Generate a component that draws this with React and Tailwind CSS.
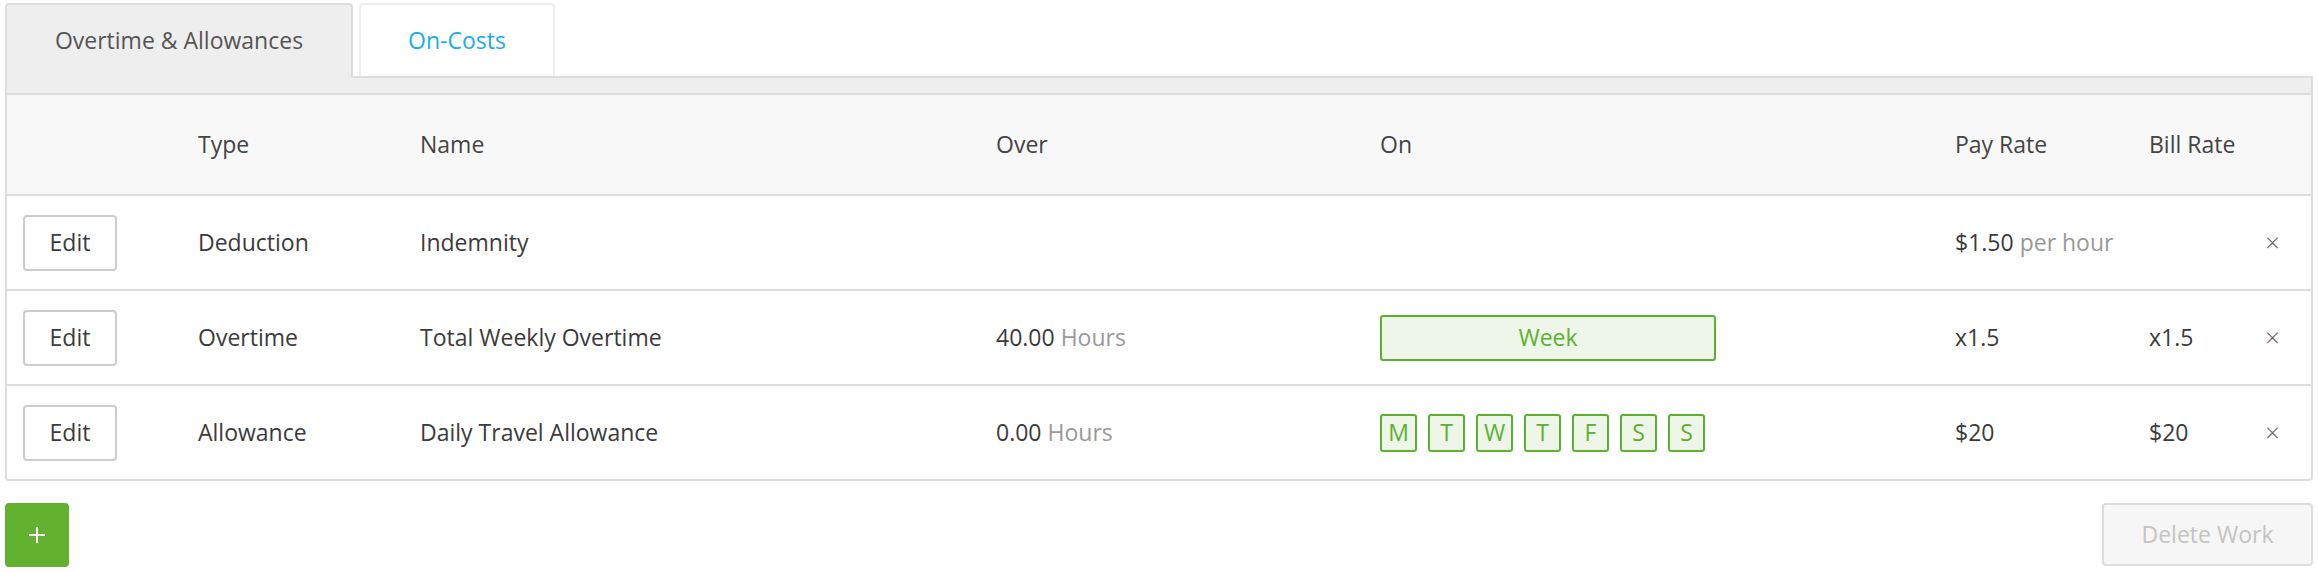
import React from "react";

const cols = "grid grid-cols-[191px_222px_576px_384px_575px_194px_113px_1fr] items-center";

const rows = [
    { type: "Deduction", name: "Indemnity", over: null, on: null, pay: ["$1.50", "per hour"], bill: "" },
    { type: "Overtime", name: "Total Weekly Overtime", over: ["40.00", "Hours"], on: "week", pay: ["x1.5"], bill: "x1.5" },
    { type: "Allowance", name: "Daily Travel Allowance", over: ["0.00", "Hours"], on: "days", pay: ["$20"], bill: "$20" },
];

const days = ["M", "T", "W", "T", "F", "S", "S"];

const OnCell = ({ on }) => {
    if (on === "week") {
        return (
            <div className="w-[336px] h-[46px] border-2 border-[#5cb130] bg-[#eef5e9] rounded-[3px] flex items-center justify-center text-[#5cb130]">
                Week
            </div>
        );
    }
    if (on === "days") {
        return (
            <div className="flex gap-[11px]">
                {days.map((d, i) => (
                    <div key={i} className="w-[37px] h-[38px] border-2 border-[#5cb130] bg-[#eef5e9] rounded-[3px] flex items-center justify-center text-[#5cb130]">
                        {d}
                    </div>
                ))}
            </div>
        );
    }
    return null;
};

const App = () => {
    return (
        <div className="w-[2318px] h-[572px] bg-white px-[5px] text-[23px] text-[#3b3b3b]" style={{ fontFamily: '"Open Sans", "Noto Sans", sans-serif' }}>
            {/* Tabs */}
            <div className="flex items-end gap-[6px] pt-[3px] border-b-2 border-[#dddddd]">
                <div className="relative z-10 -mb-[2px] w-[348px] h-[75px] pb-[2px] bg-[#eeeeee] border-2 border-b-0 border-[#dddddd] rounded-t-[4px] flex items-center justify-center text-[#555555]">
                    Overtime &amp; Allowances
                </div>
                <div className="w-[196px] h-[73px] bg-white border-2 border-b-0 border-[#eeeeee] rounded-t-[4px] flex items-center justify-center text-[#1aaee6]">
                    On-Costs
                </div>
            </div>

            {/* Panel */}
            <div className="border-x-2 border-b-2 border-[#dddddd] rounded-b-[4px]">
                <div className="h-[15px] bg-[#eeeeee]" />

                <div className={`${cols} h-[101px] border-t-2 border-[#dddddd] bg-[#f8f8f8] text-[#444444]`}>
                    <div />
                    <div>Type</div>
                    <div>Name</div>
                    <div>Over</div>
                    <div>On</div>
                    <div>Pay Rate</div>
                    <div>Bill Rate</div>
                    <div />
                </div>

                {rows.map((r, i) => (
                    <div key={i} className={`${cols} h-[95px] border-t-2 border-[#dddddd]`}>
                        <div className="pl-[16px]">
                            <button className="w-[94px] h-[56px] border-2 border-[#cccccc] rounded-[4px] bg-white text-[#3b3b3b]">
                                Edit
                            </button>
                        </div>
                        <div>{r.type}</div>
                        <div>{r.name}</div>
                        <div>
                            {r.over && (
                                <span>
                                    {r.over[0]} <span className="text-[#999999]">{r.over[1]}</span>
                                </span>
                            )}
                        </div>
                        <div>
                            <OnCell on={r.on} />
                        </div>
                        <div>
                            {r.pay[0]}
                            {r.pay[1] && <span className="text-[#999999]"> {r.pay[1]}</span>}
                        </div>
                        <div>{r.bill}</div>
                        <div className="pl-[3px] text-[#666666] text-[26px] font-light">×</div>
                    </div>
                ))}
            </div>

            {/* Footer buttons */}
            <div className="flex justify-between items-start mt-[22px]">
                <button className="w-[64px] h-[64px] bg-[#62b22f] rounded-[4px] flex items-center justify-center">
                    <svg width="16" height="16" viewBox="0 0 16 16">
                        <path d="M8 0v16M0 8h16" stroke="#ffffff" strokeWidth="2" />
                    </svg>
                </button>
                <button className="w-[211px] h-[63px] bg-[#f6f6f6] border-2 border-[#dddddd] rounded-[4px] text-[#c4c4c4]">
                    Delete Work
                </button>
            </div>
        </div>
    );
};

export default App;
